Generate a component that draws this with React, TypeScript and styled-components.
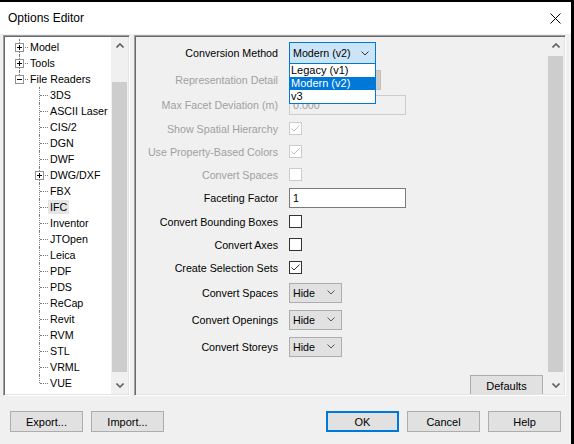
import React from 'react';
import styled, { createGlobalStyle } from 'styled-components';

const GlobalStyle = createGlobalStyle`
  html, body {
    margin: 0;
    padding: 0;
    background: #000;
  }
  body {
    font-family: "Liberation Sans", Arial, sans-serif;
    font-size: 10.7px;
    color: #000;
  }
  * { box-sizing: border-box; }
`;

const Window = styled.div`
  width: 574px;
  height: 444px;
  border-top: 2px solid #000;
  border-right: 3px solid #000;
  background: #f0f0f0;
  display: flex;
  flex-direction: column;
`;

const TitleBar = styled.div`
  height: 32px;
  background: #fff;
  display: flex;
  align-items: center;
  justify-content: space-between;
  padding: 0 10px 0 8px;
  font-size: 12px;
`;

const Body = styled.div`
  display: flex;
  gap: 4px;
  padding: 1px 5px 0 3px;
  height: 362px;
`;

const Sunken = styled.div`
  border: 1px solid;
  border-color: #a0a0a0 #fff #fff #a0a0a0;
  box-shadow: inset 1px 1px 0 #696969, inset -1px -1px 0 #e3e3e3;
  padding: 1px;
  display: flex;
  overflow: hidden;
`;

const TreePanel = styled(Sunken)`
  width: 127px;
  background: #fff;
`;

const SettingsPanel = styled(Sunken)`
  flex: 1;
  background: #f0f0f0;
`;

const TreeList = styled.div`
  flex: 1;
  padding-top: 2px;
`;

const TreeRow = styled.div<{ $level: number }>`
  display: flex;
  align-items: center;
  height: 16px;
  padding-left: ${(p) => p.$level * 20}px;
`;

const Gutter = styled.div<{ $last: boolean }>`
  position: relative;
  width: 23px;
  height: 16px;
  flex: none;

  &::before {
    content: '';
    position: absolute;
    left: 14px;
    top: 0;
    height: ${(p) => (p.$last ? '8px' : '16px')};
    border-left: 1px dotted #7a7a7a;
  }

  &::after {
    content: '';
    position: absolute;
    left: 15px;
    right: 0;
    top: 8px;
    border-top: 1px dotted #7a7a7a;
  }
`;

const Expander = styled.div`
  position: absolute;
  left: 10px;
  top: 4px;
  width: 9px;
  height: 9px;
  border: 1px solid #919191;
  background: #fff;
  z-index: 1;
  display: flex;
  align-items: center;
  justify-content: center;
`;

const TreeLabel = styled.span<{ $selected: boolean }>`
  height: 14px;
  line-height: 14px;
  padding: 0 2px;
  white-space: nowrap;
  background: ${(p) => (p.$selected ? '#e5e5e5' : 'transparent')};
`;

const ScrollBar = styled.div`
  width: 17px;
  flex: none;
  background: #f0f0f0;
  display: flex;
  flex-direction: column;
`;

const ArrowCell = styled.div`
  height: 17px;
  display: flex;
  align-items: center;
  justify-content: center;
  flex: none;
`;

const Thumb = styled.div<{ $top: number }>`
  flex: 1;
  margin: ${(p) => p.$top}px 1px 5px 1px;
  background: #cdcdcd;
`;

const Form = styled.div`
  flex: 1;
  display: flex;
  flex-direction: column;
  padding-top: 3px;
  overflow: hidden;
`;

const Row = styled.div<{ $h: number }>`
  display: grid;
  grid-template-columns: 142px auto;
  column-gap: 11px;
  align-items: center;
  height: ${(p) => p.$h}px;
`;

const Label = styled.div<{ $disabled?: boolean }>`
  text-align: right;
  white-space: nowrap;
  color: ${(p) => (p.$disabled ? '#a0a0a0' : '#000')};
`;

const Control = styled.div`
  display: flex;
  align-items: center;
`;

const SelectBox = styled.div<{ $w: number; $variant: 'focus' | 'normal' | 'disabled' }>`
  position: relative;
  width: ${(p) => p.$w}px;
  height: ${(p) => (p.$variant === 'focus' ? 22 : 20)}px;
  display: flex;
  align-items: center;
  justify-content: space-between;
  padding: 0 6px 0 3px;
  border: 1px solid
    ${(p) => (p.$variant === 'focus' ? '#0078d7' : p.$variant === 'disabled' ? '#bfbfbf' : '#adadad')};
  background: ${(p) => (p.$variant === 'focus' ? '#cce4f7' : p.$variant === 'disabled' ? '#cccccc' : '#e1e1e1')};
  color: ${(p) => (p.$variant === 'disabled' ? '#a0a0a0' : '#000')};
`;

const DropList = styled.div`
  position: absolute;
  left: -1px;
  top: 20px;
  width: 87px;
  border: 1px solid #0078d7;
  background: #fff;
  z-index: 5;
  display: flex;
  flex-direction: column;
  font-size: 11px;
`;

const DropItem = styled.div<{ $active?: boolean }>`
  height: 13px;
  line-height: 13px;
  padding-left: 1px;
  background: ${(p) => (p.$active ? '#0078d7' : '#fff')};
  color: ${(p) => (p.$active ? '#fff' : '#000')};
`;

const TextInput = styled.div<{ $disabled?: boolean }>`
  width: 117px;
  height: 20px;
  display: flex;
  align-items: center;
  padding-left: 3px;
  border: 1px solid ${(p) => (p.$disabled ? '#cccccc' : '#7a7a7a')};
  background: ${(p) => (p.$disabled ? '#f0f0f0' : '#fff')};
  color: ${(p) => (p.$disabled ? '#a0a0a0' : '#000')};
`;

const CheckBox = styled.div<{ $disabled?: boolean }>`
  width: 13px;
  height: 13px;
  border: 1px solid ${(p) => (p.$disabled ? '#cccccc' : '#333')};
  background: #fff;
  display: flex;
  align-items: center;
  justify-content: center;
`;

const DefaultsRow = styled.div`
  margin-top: auto;
  display: flex;
  justify-content: flex-end;
  padding-right: 4px;
  margin-bottom: -2px;
`;

const Footer = styled.div`
  display: flex;
  gap: 8px;
  padding: 15px 10px 0 10px;
`;

const Spacer = styled.div`
  flex: 1;
`;

const Button = styled.button<{ $primary?: boolean }>`
  width: 73px;
  height: 21px;
  padding: 0;
  font-family: inherit;
  font-size: 11px;
  color: #000;
  background: #e1e1e1;
  border: ${(p) => (p.$primary ? '2px solid #0078d7' : '1px solid #adadad')};
`;

const Chevron = ({ color = '#333', w = 8 }: { color?: string; w?: number }) => (
  <svg width={w} height={5} viewBox={`0 0 ${w} 5`}>
    <polyline
      points={`0.5,0.5 ${w / 2},4 ${w - 0.5},0.5`}
      fill="none"
      stroke={color}
      strokeWidth={1}
    />
  </svg>
);

const ScrollArrow = ({ up }: { up?: boolean }) => (
  <svg width={8} height={5} viewBox="0 0 8 5">
    <polyline
      points={up ? '0.5,4.5 4,1 7.5,4.5' : '0.5,0.5 4,4 7.5,0.5'}
      fill="none"
      stroke="#606060"
      strokeWidth={1.6}
    />
  </svg>
);

const Scroll = ({ thumbTop }: { thumbTop: number }) => (
  <ScrollBar>
    <ArrowCell>
      <ScrollArrow up />
    </ArrowCell>
    <Thumb $top={thumbTop} />
    <ArrowCell>
      <ScrollArrow />
    </ArrowCell>
  </ScrollBar>
);

const Check = ({ checked, disabled }: { checked?: boolean; disabled?: boolean }) => (
  <CheckBox $disabled={disabled}>
    {checked && (
      <svg width={11} height={11} viewBox="0 0 11 11">
        <polyline
          points="1.5,5.5 4,8 9.5,2.5"
          fill="none"
          stroke={disabled ? '#c0c0c0' : '#333'}
          strokeWidth={1}
        />
      </svg>
    )}
  </CheckBox>
);

type TreeNode = {
  label: string;
  level: number;
  exp?: 'plus' | 'minus';
  last?: boolean;
  selected?: boolean;
};

const readers = [
  '3DS', 'ASCII Laser', 'CIS/2', 'DGN', 'DWF', 'DWG/DXF', 'FBX', 'IFC', 'Inventor',
  'JTOpen', 'Leica', 'PDF', 'PDS', 'ReCap', 'Revit', 'RVM', 'STL', 'VRML', 'VUE',
];

const tree: TreeNode[] = [
  { label: 'Model', level: 0, exp: 'plus' },
  { label: 'Tools', level: 0, exp: 'plus' },
  { label: 'File Readers', level: 0, exp: 'minus', last: true },
  ...readers.map((r, i) => ({
    label: r,
    level: 1,
    exp: r === 'DWG/DXF' ? ('plus' as const) : undefined,
    last: i === readers.length - 1,
    selected: r === 'IFC',
  })),
];

const ExpanderSign = ({ type }: { type: 'plus' | 'minus' }) => (
  <svg width={7} height={7} viewBox="0 0 7 7">
    <line x1={1} y1={3.5} x2={6} y2={3.5} stroke="#000" strokeWidth={1} />
    {type === 'plus' && <line x1={3.5} y1={1} x2={3.5} y2={6} stroke="#000" strokeWidth={1} />}
  </svg>
);

const HideSelect = () => (
  <SelectBox $w={53} $variant="normal">
    <span>Hide</span>
    <Chevron color="#555" w={8} />
  </SelectBox>
);

export default function App() {
  return (
    <>
      <GlobalStyle />
      <Window>
        <TitleBar>
          <span>Options Editor</span>
          <svg width={11} height={11} viewBox="0 0 11 11">
            <line x1={0.5} y1={0.5} x2={10.5} y2={10.5} stroke="#000" strokeWidth={1} />
            <line x1={10.5} y1={0.5} x2={0.5} y2={10.5} stroke="#000" strokeWidth={1} />
          </svg>
        </TitleBar>

        <Body>
          <TreePanel>
            <TreeList>
              {tree.map((n) => (
                <TreeRow key={n.label} $level={n.level}>
                  <Gutter $last={!!n.last}>
                    {n.exp && (
                      <Expander>
                        <ExpanderSign type={n.exp} />
                      </Expander>
                    )}
                  </Gutter>
                  <TreeLabel $selected={!!n.selected}>{n.label}</TreeLabel>
                </TreeRow>
              ))}
            </TreeList>
            <Scroll thumbTop={28} />
          </TreePanel>

          <SettingsPanel>
            <Form>
              <Row $h={26}>
                <Label>Conversion Method</Label>
                <Control>
                  <SelectBox $w={87} $variant="focus">
                    <span>Modern (v2)</span>
                    <Chevron />
                    <DropList>
                      <DropItem>Legacy (v1)</DropItem>
                      <DropItem $active>Modern (v2)</DropItem>
                      <DropItem>v3</DropItem>
                    </DropList>
                  </SelectBox>
                </Control>
              </Row>
              <Row $h={27}>
                <Label $disabled>Representation Detail</Label>
                <Control>
                  <SelectBox $w={92} $variant="disabled">
                    <span />
                  </SelectBox>
                </Control>
              </Row>
              <Row $h={24}>
                <Label $disabled>Max Facet Deviation (m)</Label>
                <Control>
                  <TextInput $disabled>0.000</TextInput>
                </Control>
              </Row>
              <Row $h={23}>
                <Label $disabled>Show Spatial Hierarchy</Label>
                <Control>
                  <Check checked disabled />
                </Control>
              </Row>
              <Row $h={23}>
                <Label $disabled>Use Property-Based Colors</Label>
                <Control>
                  <Check checked disabled />
                </Control>
              </Row>
              <Row $h={23}>
                <Label $disabled>Convert Spaces</Label>
                <Control>
                  <Check disabled />
                </Control>
              </Row>
              <Row $h={24}>
                <Label>Faceting Factor</Label>
                <Control>
                  <TextInput>1</TextInput>
                </Control>
              </Row>
              <Row $h={23}>
                <Label>Convert Bounding Boxes</Label>
                <Control>
                  <Check />
                </Control>
              </Row>
              <Row $h={23}>
                <Label>Convert Axes</Label>
                <Control>
                  <Check />
                </Control>
              </Row>
              <Row $h={23}>
                <Label>Create Selection Sets</Label>
                <Control>
                  <Check checked />
                </Control>
              </Row>
              <Row $h={27}>
                <Label>Convert Spaces</Label>
                <Control>
                  <HideSelect />
                </Control>
              </Row>
              <Row $h={27}>
                <Label>Convert Openings</Label>
                <Control>
                  <HideSelect />
                </Control>
              </Row>
              <Row $h={27}>
                <Label>Convert Storeys</Label>
                <Control>
                  <HideSelect />
                </Control>
              </Row>
              <DefaultsRow>
                <Button>Defaults</Button>
              </DefaultsRow>
            </Form>
            <Scroll thumbTop={2} />
          </SettingsPanel>
        </Body>

        <Footer>
          <Button>Export...</Button>
          <Button>Import...</Button>
          <Spacer />
          <Button $primary>OK</Button>
          <Button>Cancel</Button>
          <Button>Help</Button>
        </Footer>
      </Window>
    </>
  );
}
